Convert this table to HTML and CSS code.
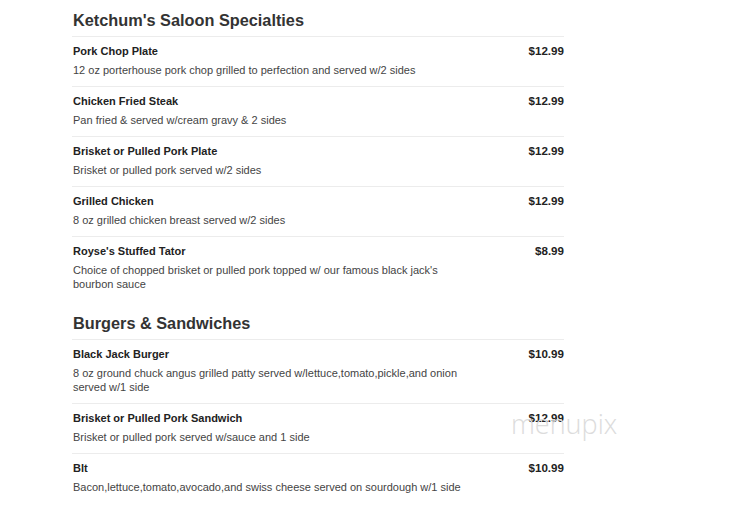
FILE: index.html
```html
<!DOCTYPE html>
<html lang="en">
<head>
<meta charset="utf-8">
<title>Ketchum's Saloon Menu</title>
<link rel="stylesheet" href="styles.css">
</head>
<body>
<main class="menu">
  <section class="section">
    <h2 class="section-title">Ketchum's Saloon Specialties</h2>
    <div class="item">
      <div class="item-info">
        <div class="item-name">Pork Chop Plate</div>
        <div class="item-desc">12 oz porterhouse pork chop grilled to perfection and served w/2 sides</div>
      </div>
      <div class="item-price">$12.99</div>
    </div>
    <div class="item">
      <div class="item-info">
        <div class="item-name">Chicken Fried Steak</div>
        <div class="item-desc">Pan fried &amp; served w/cream gravy &amp; 2 sides</div>
      </div>
      <div class="item-price">$12.99</div>
    </div>
    <div class="item">
      <div class="item-info">
        <div class="item-name">Brisket or Pulled Pork Plate</div>
        <div class="item-desc">Brisket or pulled pork served w/2 sides</div>
      </div>
      <div class="item-price">$12.99</div>
    </div>
    <div class="item">
      <div class="item-info">
        <div class="item-name">Grilled Chicken</div>
        <div class="item-desc">8 oz grilled chicken breast served w/2 sides</div>
      </div>
      <div class="item-price">$12.99</div>
    </div>
    <div class="item">
      <div class="item-info">
        <div class="item-name">Royse's Stuffed Tator</div>
        <div class="item-desc">Choice of chopped brisket or pulled pork topped w/ our famous black jack's bourbon sauce</div>
      </div>
      <div class="item-price">$8.99</div>
    </div>
  </section>
  <section class="section">
    <h2 class="section-title">Burgers &amp; Sandwiches</h2>
    <div class="item">
      <div class="item-info">
        <div class="item-name">Black Jack Burger</div>
        <div class="item-desc">8 oz ground chuck angus grilled patty served w/lettuce,tomato,pickle,and onion served w/1 side</div>
      </div>
      <div class="item-price">$10.99</div>
    </div>
    <div class="item">
      <div class="item-info">
        <div class="item-name">Brisket or Pulled Pork Sandwich</div>
        <div class="item-desc">Brisket or pulled pork served w/sauce and 1 side</div>
      </div>
      <div class="item-price">$12.99</div>
    </div>
    <div class="item">
      <div class="item-info">
        <div class="item-name">Blt</div>
        <div class="item-desc">Bacon,lettuce,tomato,avocado,and swiss cheese served on sourdough w/1 side</div>
      </div>
      <div class="item-price">$10.99</div>
    </div>
  </section>
</main>
<div class="watermark">menupix</div>
</body>
</html>
```
FILE: styles.css
```css
html, body {
  margin: 0;
  padding: 0;
  background: #ffffff;
}

body {
  font-family: "Liberation Sans", Arial, sans-serif;
  color: #333333;
  width: 744px;
  height: 508px;
  overflow: hidden;
  position: relative;
}

.menu {
  width: 492px;
  margin-left: 72px;
}

.section {
  margin-top: 13px;
}

.section:first-child {
  margin-top: 10px;
}

.section-title {
  margin: 0;
  padding: 0 0 6px 1px;
  font-size: 16.3px;
  line-height: 20px;
  font-weight: bold;
  color: #333333;
  border-bottom: 1px solid #ececec;
}

.item {
  display: flex;
  justify-content: space-between;
  align-items: flex-start;
  padding: 7px 0 9px 1px;
  border-bottom: 1px solid #ececec;
}

.item:last-child {
  border-bottom: none;
}

.item-info {
  width: 400px;
}

.item-name {
  font-size: 11px;
  line-height: 14px;
  font-weight: bold;
  color: #222222;
}

.item-desc {
  margin-top: 5px;
  font-size: 11px;
  line-height: 14px;
  color: #444444;
}

.item-price {
  font-size: 11.6px;
  line-height: 14px;
  font-weight: bold;
  color: #222222;
  text-align: right;
}

.watermark {
  position: absolute;
  left: 511px;
  top: 405px;
  font-family: "Open Sans", "DejaVu Sans", sans-serif;
  font-weight: 300;
  font-size: 27px;
  color: #dcdcdc;
  pointer-events: none;
}
```
